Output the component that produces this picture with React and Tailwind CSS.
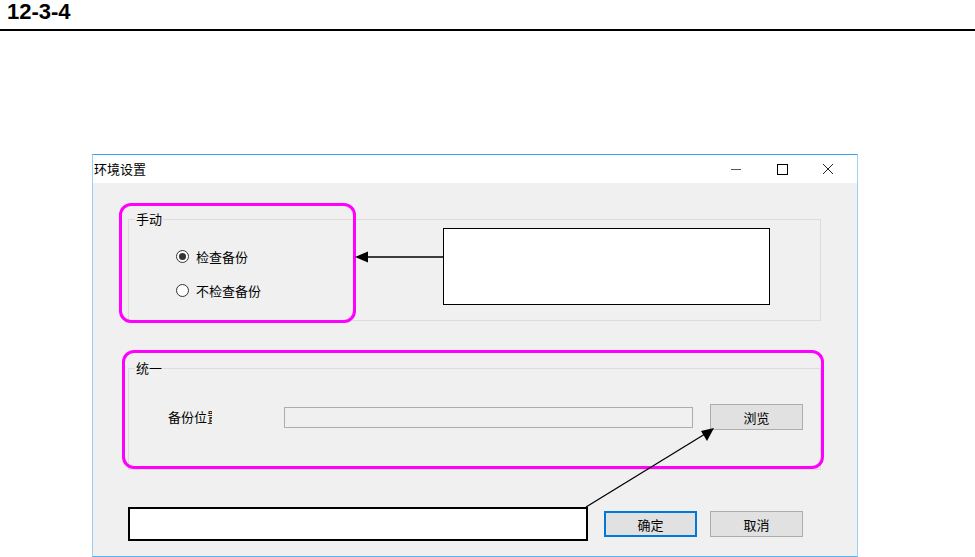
import React from "react";

const cjk = { fontFamily: '"Noto Sans CJK SC", "Microsoft YaHei", sans-serif' };

const Radio = ({ checked, label }) => (
  <div className="flex items-center gap-[7px] h-[16px]">
    <div className="w-[13px] h-[13px] rounded-full border border-[#333] bg-white flex items-center justify-center">
      {checked && <div className="w-[7px] h-[7px] rounded-full bg-[#333]" />}
    </div>
    <span className="text-[13px] text-[#000] leading-none">{label}</span>
  </div>
);

const GroupBox = ({ title, className, children }) => (
  <div className={`relative border border-[#dcdcdc] ${className}`}>
    <span className="absolute left-[6px] -top-[10px] px-[1px] bg-[#f0f0f0] text-[13px] leading-[18px] text-black">
      {title}
    </span>
    {children}
  </div>
);

const WinButton = ({ children, primary }) => (
  <button
    className={`w-[93px] h-[26px] bg-[#e1e1e1] text-[13px] text-black leading-none ${
      primary ? "border-2 border-[#0078d7]" : "border border-[#adadad]"
    }`}
  >
    {children}
  </button>
);

export default function App() {
  return (
    <div className="relative w-[975px] h-[557px] bg-white overflow-hidden">
      {/* page header */}
      <div className="h-[31px] border-b-2 border-black pl-[7px]">
        <span
          className="text-[22px] font-bold leading-[24px] text-black"
          style={{ fontFamily: '"Liberation Sans", Arial, sans-serif' }}
        >
          12-3-4
        </span>
      </div>

      {/* dialog window */}
      <div
        className="relative ml-[92px] mt-[123px] w-[766px] h-[403px] border border-[#9fd0f3] border-t-[#3c9fe6] border-b-[#5bb2ee] bg-[#f0f0f0] flex flex-col"
        style={cjk}
      >
        <div className="h-[28px] bg-white flex items-center justify-between shrink-0">
          <span className="pl-[1px] text-[13px] text-black">环境设置</span>
          <div className="flex items-center h-full">
            <div className="w-[46px] h-full flex items-center justify-center">
              <div className="w-[10px] h-[1px] bg-[#555]" />
            </div>
            <div className="w-[46px] h-full flex items-center justify-center">
              <div className="w-[11px] h-[11px] border border-black" />
            </div>
            <div className="w-[46px] h-full flex items-center justify-center mr-[6px]">
              <svg width="12" height="12" viewBox="0 0 12 12">
                <path d="M1 1 L11 11 M11 1 L1 11" stroke="#222" strokeWidth="1" fill="none" />
              </svg>
            </div>
          </div>
        </div>

        <div className="flex-1 flex flex-col pl-[35px] pr-[36px]">
          <GroupBox title="手动" className="mt-[36px] h-[102px]">
            <div className="flex flex-col gap-[18px] pl-[47px] pt-[28px]">
              <Radio checked label="检查备份" />
              <Radio label="不检查备份" />
            </div>
          </GroupBox>

          <GroupBox title="统一" className="mt-[47px] h-[102px]">
            <div className="flex items-center pl-[39px] pt-[35px] h-[61px]">
              <div className="w-[44px] overflow-hidden whitespace-nowrap text-[13px] text-black">备份位置</div>
              <div className="ml-[72px] w-[409px] h-[21px] border border-[#adadad] bg-[#f0f0f0]" />
              <div className="ml-[17px]">
                <WinButton>浏览</WinButton>
              </div>
            </div>
          </GroupBox>

          <div className="mt-[41px] mr-[18px] flex justify-end gap-[13px]">
            <WinButton primary>确定</WinButton>
            <WinButton>取消</WinButton>
          </div>
        </div>

        {/* annotation overlays */}
        <div className="absolute left-[26px] top-[48px] w-[237px] h-[120px] border-[3px] border-[#ff00ff] rounded-[12px] pointer-events-none" />
        <div className="absolute left-[29px] top-[195px] w-[702px] h-[119px] border-[3px] border-[#ff00ff] rounded-[12px] pointer-events-none" />
        <div className="absolute left-[350px] top-[73px] w-[327px] h-[77px] bg-white border border-black" />
        <div className="absolute left-[35px] top-[352px] w-[460px] h-[34px] bg-white border-2 border-black" />
      </div>

      {/* arrows */}
      <svg className="absolute inset-0 pointer-events-none" width="975" height="557">
        <line x1="443" y1="257" x2="366" y2="257" stroke="black" strokeWidth="1.3" />
        <polygon points="355,257 368,251.5 368,262.5" fill="black" />
        <line x1="586" y1="507" x2="705" y2="434" stroke="black" strokeWidth="1.3" />
        <polygon points="714,428 701,431 707,441" fill="black" />
      </svg>
    </div>
  );
}
